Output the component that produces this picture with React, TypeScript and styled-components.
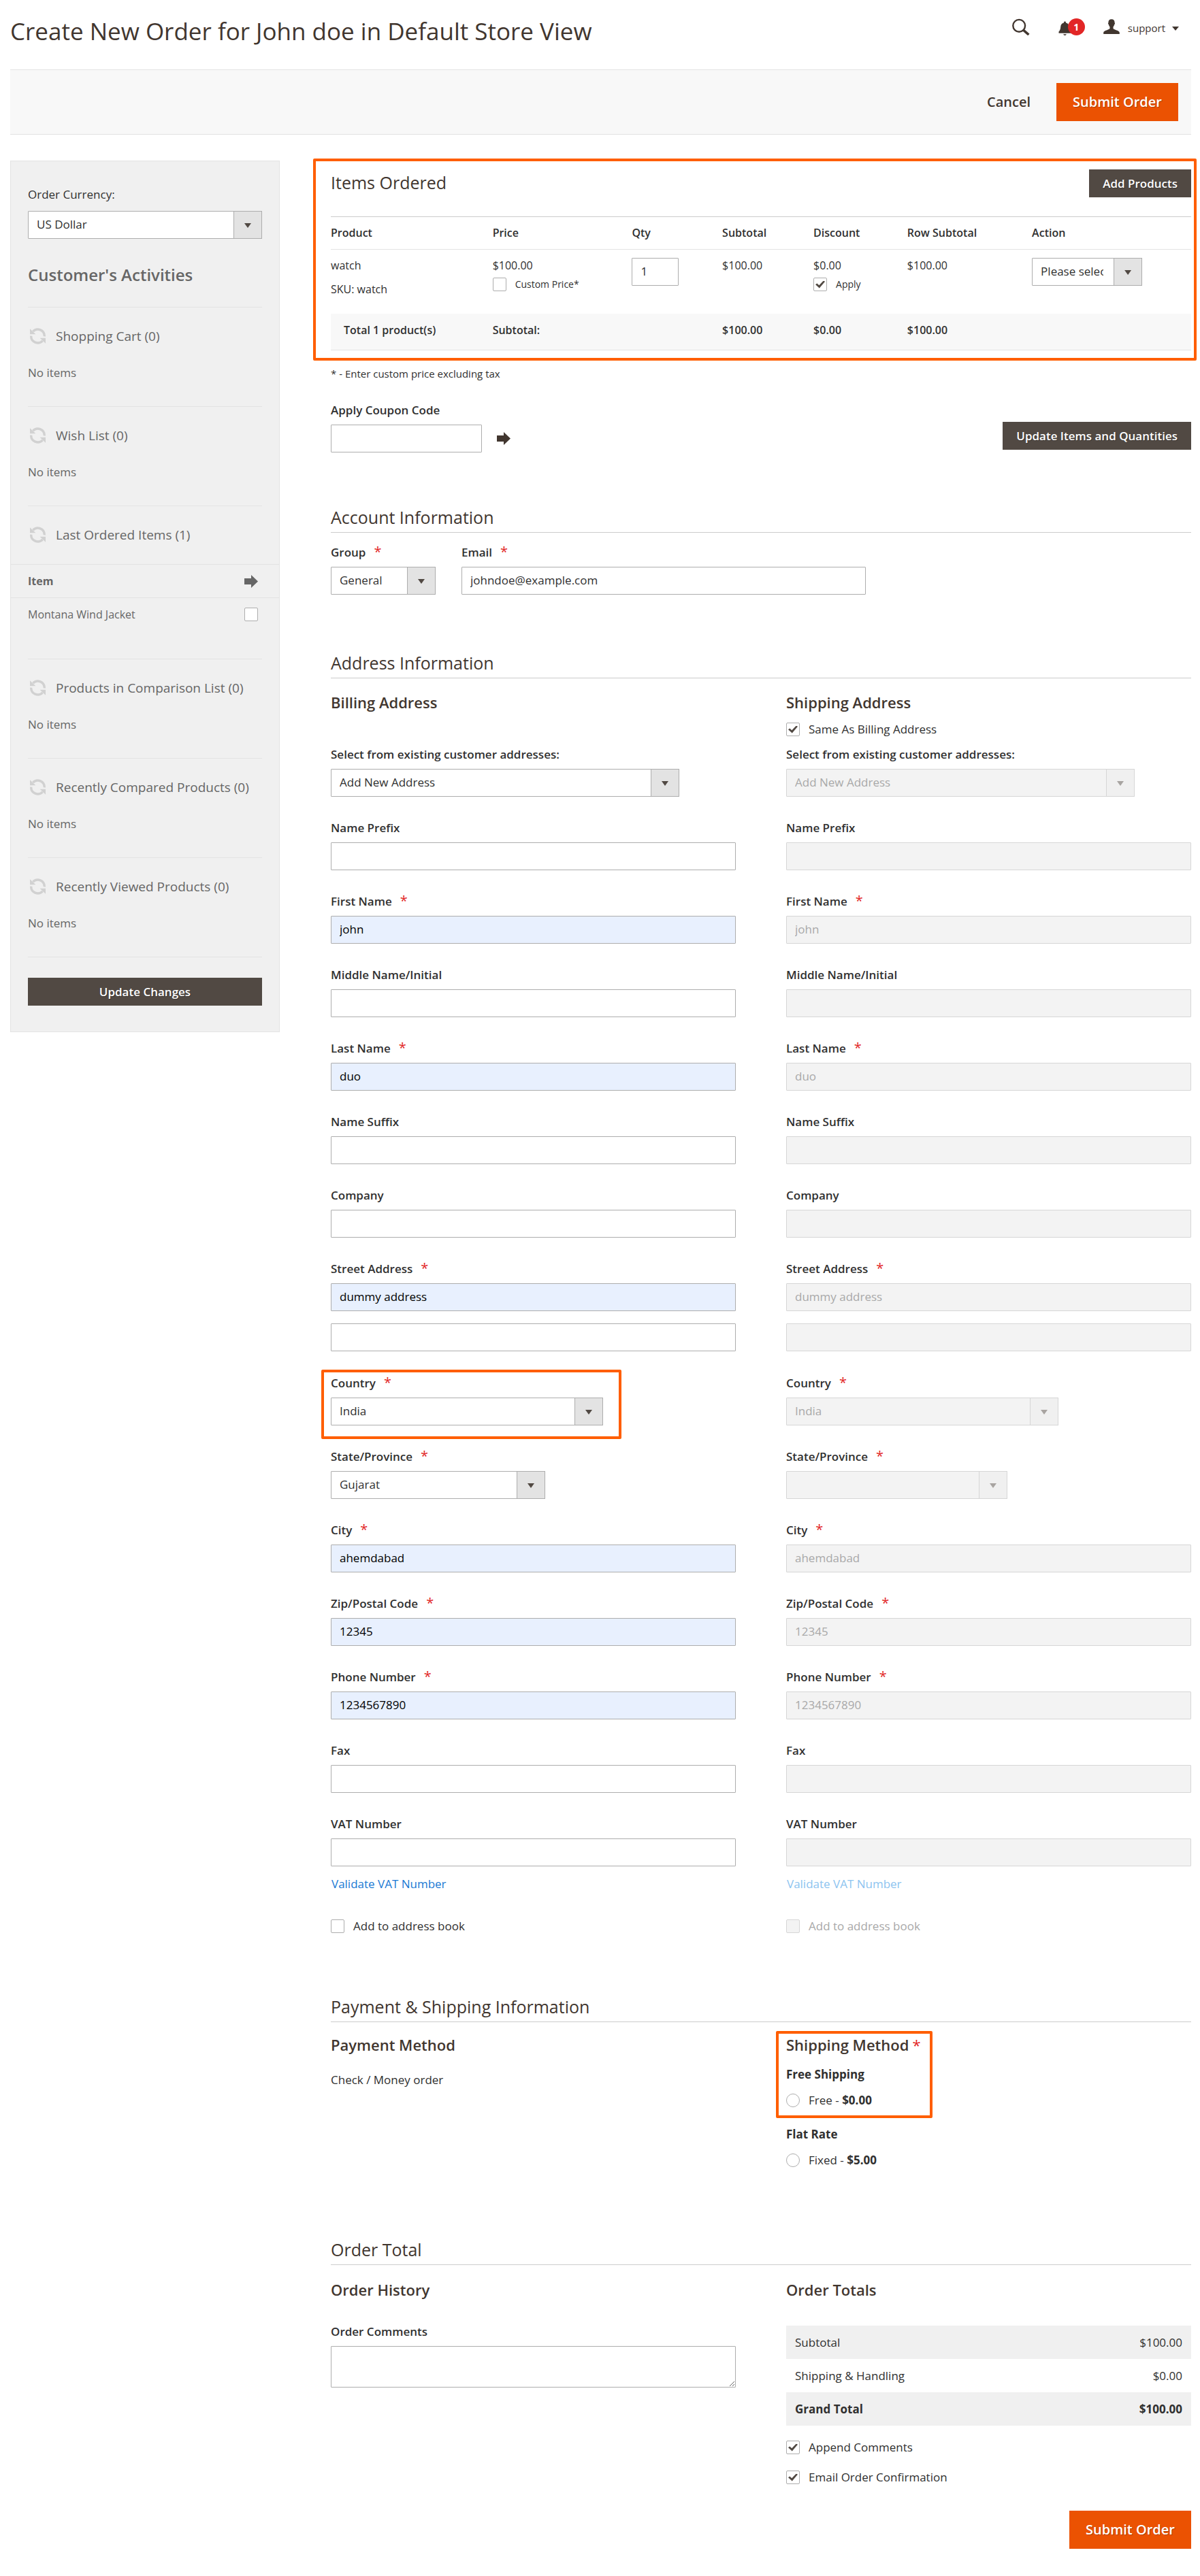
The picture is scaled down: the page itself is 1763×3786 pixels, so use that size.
import React, { useId } from "react";
import styled, { createGlobalStyle, css } from "styled-components";

const GlobalStyle = createGlobalStyle`
  *, *::before, *::after { box-sizing: border-box; }
  body {
    margin: 0;
    background: #fff;
    color: #303030;
    font-family: "Open Sans", "Noto Sans", sans-serif;
    font-size: 17px;
    line-height: 24px;
  }
  input, select, textarea, button {
    margin: 0;
    font: inherit;
    color: inherit;
  }
  h1, h2, h3, h4, p { margin: 0; }
`;

/* ---------- page frame ---------- */

const Page = styled.div`
  padding: 0 13px 39px 15px;
`;

const Header = styled.header`
  display: flex;
  justify-content: space-between;
  height: 102px;
`;

const PageTitle = styled.h1`
  margin-top: 22px;
  font-size: 35px;
  line-height: 48px;
  font-weight: 400;
  color: #41362f;
`;

const HeaderTools = styled.div`
  display: flex;
  align-items: center;
  height: 26px;
  margin-top: 26px;
  margin-right: 18px;
`;

const IconButton = styled.button`
  display: flex;
  align-items: center;
  padding: 0;
  border: 0;
  background: none;
  color: #41362f;
`;

const NotificationButton = styled(IconButton)`
  position: relative;
  width: 39px;
  margin-left: 42px;
`;

const NotificationBadge = styled.span`
  position: absolute;
  top: 0;
  right: 0;
  width: 25px;
  height: 25px;
  border-radius: 50%;
  background: #e22626;
  color: #fff;
  font-size: 14px;
  line-height: 25px;
  font-weight: 700;
  text-align: center;
`;

const AccountButton = styled(IconButton)`
  margin-left: 27px;
  font-size: 15px;
`;

const AccountName = styled.span`
  margin: 0 10px 0 12px;
  padding-top: 3px;
  line-height: 22px;
`;

const Caret = styled.span`
  width: 10px;
  height: 6px;
  margin-top: 6px;
  background: #41362f;
  clip-path: polygon(0 0, 100% 0, 50% 100%);
`;

const Toolbar = styled.div`
  display: flex;
  justify-content: flex-end;
  align-items: center;
  height: 96px;
  padding-right: 19px;
  border-top: 1px solid #e3e3e3;
  border-bottom: 1px solid #e3e3e3;
  background: #f8f8f8;
`;

const PrimaryButton = styled.button`
  min-width: 179px;
  height: 56px;
  padding: 0 19px;
  border: 0;
  background: #eb5202;
  color: #fff;
  font-size: 20px;
  font-weight: 600;
  text-shadow: 1px 1px 0 rgba(0, 0, 0, 0.25);
`;

const TextButton = styled.button`
  height: 56px;
  padding: 0 38px 0 20px;
  border: 0;
  background: none;
  color: #41362f;
  font-size: 20px;
  font-weight: 600;
`;

const DarkButton = styled.button`
  height: 41px;
  padding: 0 20px;
  border: 0;
  background: #514943;
  color: #fff;
  font-weight: 600;
  text-shadow: 1px 1px 0 rgba(0, 0, 0, 0.3);
`;

const Columns = styled.div`
  display: grid;
  grid-template-columns: 396px minmax(0, 1fr);
  column-gap: 75px;
  align-items: start;
  margin-top: 38px;
`;

/* ---------- form controls ---------- */

const controlBase = css`
  width: 100%;
  height: 41px;
  padding: 0 12px 2px;
  border: 1px solid #adadad;
  border-radius: 1px;
  background: #fff;
  color: #303030;
  opacity: 1;
  &:disabled {
    border-color: #d6d6d6;
    background: #f3f3f3;
    color: #a9a9a9;
  }
`;

const TextInput = styled.input<{ $filled?: boolean }>`
  ${controlBase}
  ${(p) => p.$filled && css`background: #e8f0fe; color: #000;`}
`;

const TextArea = styled.textarea`
  ${controlBase}
  display: block;
  height: 61px;
`;

const SelectBox = styled.span<{ $width: string }>`
  display: grid;
  width: ${(p) => p.$width};
  max-width: 100%;
`;

const NativeSelect = styled.select`
  ${controlBase}
  grid-area: 1 / 1;
  padding-right: 56px;
  appearance: none;
`;

const SelectArrow = styled.span<{ $disabled?: boolean }>`
  grid-area: 1 / 1;
  justify-self: end;
  display: flex;
  align-items: center;
  justify-content: center;
  width: 42px;
  height: 41px;
  border: 1px solid ${(p) => (p.$disabled ? "#d6d6d6" : "#adadad")};
  background: ${(p) => (p.$disabled ? "#f0f0f0" : "#e3e3e3")};
  pointer-events: none;
  &::before {
    content: "";
    width: 10px;
    height: 7px;
    margin-top: 2px;
    background: ${(p) => (p.$disabled ? "#a8a4a1" : "#514943")};
    clip-path: polygon(0 0, 100% 0, 50% 100%);
  }
`;

const tickBase = css`
  flex: none;
  display: grid;
  place-items: center;
  width: 20px;
  height: 20px;
  border: 1px solid #adadad;
  background: #fff;
  appearance: none;
  &:disabled {
    border-color: #d6d6d6;
    background: #f3f3f3;
  }
`;

const CheckInput = styled.input`
  ${tickBase}
  border-radius: 2px;
  &:checked::before {
    content: "";
    width: 14px;
    height: 11px;
    background: #514943;
    clip-path: polygon(0 52%, 16% 36%, 38% 62%, 84% 0, 100% 12%, 41% 100%);
  }
`;

const RadioInput = styled.input`
  ${tickBase}
  border-radius: 50%;
`;

const TickRow = styled.label<{ $muted?: boolean; $small?: boolean }>`
  display: flex;
  align-items: center;
  gap: 13px;
  min-height: ${(p) => (p.$small ? "20px" : "24px")};
  font-size: ${(p) => (p.$small ? "14px" : "17px")};
  line-height: ${(p) => (p.$small ? "18px" : "24px")};
  color: ${(p) => (p.$muted ? "#a9a9a9" : "inherit")};
`;

const FieldLabel = styled.label`
  display: block;
  margin-bottom: 10px;
  line-height: 23px;
  font-weight: 600;
`;

const Star = styled.span<{ $tight?: boolean }>`
  margin-left: ${(p) => (p.$tight ? "5px" : "12px")};
  color: #e22626;
  font-size: ${(p) => (p.$tight ? "22px" : "20px")};
  line-height: 20px;
  font-weight: 400;
`;

const Select = ({ id, value, width, disabled }: { id: string; value: string; width: string; disabled?: boolean }) => (
  <SelectBox $width={width}>
    <NativeSelect id={id} defaultValue={value} disabled={disabled}>
      <option value={value}>{value}</option>
    </NativeSelect>
    <SelectArrow $disabled={disabled} aria-hidden="true" />
  </SelectBox>
);

type FieldProps = {
  label: string;
  required?: boolean;
  value?: string;
  filled?: boolean;
  disabled?: boolean;
  selectWidth?: string;
};

const Field = ({ label, required, value = "", filled, disabled, selectWidth }: FieldProps) => {
  const id = useId();
  return (
    <FieldBox>
      <FieldLabel htmlFor={id}>
        {label}
        {required && <Star>*</Star>}
      </FieldLabel>
      {selectWidth ? (
        <Select id={id} value={value} width={selectWidth} disabled={disabled} />
      ) : (
        <TextInput id={id} defaultValue={value} $filled={filled && !disabled} disabled={disabled} />
      )}
    </FieldBox>
  );
};

const FieldBox = styled.div`
  display: grid;
  grid-template-rows: 33px 41px;
  ${FieldLabel} { margin-bottom: 0; }
`;

/* Orange callout frame drawn over the part it wraps. */
const Callout = styled.div<{ $inset: string; $fit?: boolean }>`
  position: relative;
  width: ${(p) => (p.$fit ? "fit-content" : "auto")};
  &::after {
    content: "";
    position: absolute;
    inset: ${(p) => p.$inset};
    border: 4px solid #ff5e00;
    border-radius: 2px;
    pointer-events: none;
  }
`;

/* ---------- sidebar ---------- */

const Sidebar = styled.aside`
  padding: 36px 0 38px;
  border: 1px solid #e3e3e3;
  background: #f0f0f0;
  color: #666;
`;

const SidebarInset = styled.div`
  padding: 0 25px;
`;

const CurrencyLabel = styled.label`
  display: block;
  margin-bottom: 12px;
  line-height: 25px;
  color: #303030;
`;

const SidebarTitle = styled.h2`
  margin: 36px 0 30px;
  font-size: 24px;
  line-height: 34px;
  font-weight: 600;
`;

const Activity = styled.section`
  height: 146px;
  margin: 0 25px;
  padding-top: 30px;
  border-top: 1px solid #e3e3e3;
`;

const ActivityWithItems = styled(Activity)`
  height: 225px;
`;

const ActivityHead = styled.h3`
  display: flex;
  align-items: center;
  gap: 14px;
  line-height: 24px;
  font-size: 19px;
  font-weight: 400;
`;

const RefreshButton = styled.button`
  display: flex;
  width: 27px;
  height: 24px;
  padding: 0 0 0 2px;
  border: 0;
  background: none;
  color: #d1d1d1;
`;

const Empty = styled.p`
  margin-top: 30px;
`;

const ItemTable = styled.table`
  width: calc(100% + 50px);
  margin: 31px -25px 0;
  border-collapse: collapse;
  font-size: 16px;
  th, td {
    height: 49px;
    padding: 0 25px;
    text-align: left;
  }
  th {
    border-top: 1px solid #e3e3e3;
    border-bottom: 1px solid #e3e3e3;
    font-weight: 700;
  }
  th:last-child, td:last-child {
    width: 82px;
    padding: 0 31px;
  }
  svg { display: block; }
`;

const SidebarFooter = styled.div`
  display: grid;
  margin: 0 25px;
  padding-top: 30px;
  border-top: 1px solid #e3e3e3;
`;

/* ---------- order form ---------- */

const ItemsHead = styled.div`
  display: flex;
  justify-content: space-between;
  align-items: center;
  padding-top: 13px;
  margin-bottom: 28px;
`;

const ItemsTitle = styled.h2`
  padding-bottom: 4px;
  font-size: 25px;
  line-height: 34px;
  font-weight: 400;
  color: #41362f;
`;

const ItemsTable = styled.table`
  width: 100%;
  table-layout: fixed;
  border-collapse: collapse;
  border-top: 1px solid #ccc;
  font-size: 16px;
  th, td {
    padding: 0;
    text-align: left;
    vertical-align: top;
  }
  thead th {
    height: 48px;
    padding-top: 11px;
    border-bottom: 1px solid #e3e3e3;
    font-weight: 600;
  }
  tbody td {
    height: 94px;
    padding-top: 11px;
  }
  tfoot td {
    height: 54px;
    padding-top: 12px;
    border-bottom: 1px solid #e3e3e3;
    background: #f8f8f8;
    font-weight: 600;
  }
  tfoot td:first-child { padding-left: 19px; }
  tbody td label { margin-top: 6px; }
`;

const Sku = styled.div`
  margin-top: 11px;
`;

const QtyInput = styled(TextInput)`
  width: 69px;
  margin-top: 1px;
  font-size: 17px;
`;

const ActionCell = styled.div`
  margin-top: 1px;
  font-size: 17px;
`;

const Footnote = styled.p`
  margin-top: 22px;
  font-size: 15px;
`;

const CouponRow = styled.div`
  display: flex;
  justify-content: space-between;
  align-items: flex-end;
  margin-top: 30px;
`;

const CouponControls = styled.div`
  display: flex;
  align-items: center;
  gap: 22px;
`;

const CouponInput = styled(TextInput)`
  width: 222px;
`;

const UpdateButton = styled(DarkButton)`
  margin-bottom: 4px;
`;

const SectionTitle = styled.h2<{ $before: number; $after: number }>`
  margin: ${(p) => p.$before}px 0 ${(p) => p.$after}px;
  padding-bottom: 5px;
  border-bottom: 1px solid #ccc;
  font-size: 25px;
  line-height: 34px;
  font-weight: 400;
  color: #41362f;
`;

const AccountFields = styled.div`
  display: grid;
  grid-template-columns: 154px minmax(0, 594px);
  column-gap: 38px;
`;

const TwoColumns = styled.div`
  display: grid;
  grid-template-columns: repeat(2, minmax(0, 1fr));
  column-gap: 74px;
`;

const SubTitle = styled.h3`
  font-size: 22px;
  line-height: 30px;
  font-weight: 600;
  color: #41362f;
`;

const SameAddress = styled.div`
  display: flex;
  align-items: center;
  height: 50px;
`;

const FieldStack = styled.div`
  display: grid;
  row-gap: 34px;
`;

const StreetLine = styled(TextInput)`
  display: block;
  margin-top: 18px;
`;

const StreetGroup = styled.div`
  padding-bottom: 1px;
`;

const VatLink = styled.a<{ $muted?: boolean }>`
  display: block;
  width: fit-content;
  margin: 14px 0 38px 1px;
  color: ${(p) => (p.$muted ? "#8dc4f0" : "#1979d4")};
  text-decoration: none;
`;

const PaymentName = styled.p`
  margin-top: 25px;
`;

const Carrier = styled.h4<{ $gap: number }>`
  margin: ${(p) => p.$gap}px 0 14px;
  font-size: 17px;
  font-weight: 700;
`;

const CommentsField = styled.div`
  margin-top: 35px;
`;

const TotalsTable = styled.table`
  width: 100%;
  margin: 38px 0 20px;
  border-collapse: collapse;
  th, td {
    height: 49px;
    padding: 0 13px;
    font-weight: 400;
    text-align: left;
  }
  td { text-align: right; }
  tr:nth-child(odd) { background: #f0f0f0; }
  tr:last-child th, tr:last-child td { font-weight: 700; }
`;

const TickStack = styled.div`
  display: grid;
  row-gap: 20px;
`;

const SubmitRow = styled.div`
  display: flex;
  justify-content: flex-end;
  margin-top: 37px;
`;

/* ---------- icons ---------- */

const SearchIcon = () => (
  <svg width="27" height="26" viewBox="0 0 27 26" fill="none" stroke="currentColor" aria-hidden="true">
    <circle cx="11.2" cy="11.8" r="8.9" strokeWidth="2.4" />
    <path d="M17.4 18.2 L25.4 25" strokeWidth="3.6" />
  </svg>
);

const BellIcon = () => (
  <svg width="20" height="25" viewBox="0 0 20 25" fill="currentColor" aria-hidden="true">
    <path d="M9.5 4.5c.9 0 1.5.6 1.5 1.5v.5c3 .7 4.600 2.900 4.800 6 .2 3.300.9 5.300 2.700 7v2.200H.5v-2.200c1.800-1.700 2.500-3.700 2.700-7 .2-3.100 1.800-5.300 4.800-6V6c0-.9.600-1.500 1.500-1.500z" />
    <path d="M7.200 23.200h4.600c-.3 1.100-1.200 1.800-2.300 1.800s-2-.7-2.300-1.800z" />
  </svg>
);

const UserIcon = () => (
  <svg width="24" height="24" viewBox="0 0 24 24" fill="currentColor" aria-hidden="true">
    <path d="M12 1.200c3 0 4.600 2 4.600 4.800 0 .7.500.9.400 1.700-.1.700-.5 1.100-.8 1.300-.3 1.500-.9 2.700-1.700 3.500v2.300c0 .9 1.300 1.300 3.600 2.100 3.200 1.100 5.700 1.900 5.700 4.200V23H.2v-1.900c0-2.300 2.500-3.100 5.700-4.200 2.300-.8 3.600-1.200 3.600-2.100v-2.300c-.8-.8-1.400-2-1.700-3.500-.3-.2-.7-.6-.8-1.300-.1-.8.400-1 .4-1.700 0-2.800 1.600-4.800 4.600-4.800z" />
  </svg>
);

const RefreshIcon = () => (
  <svg width="25" height="24" viewBox="0 0 25 24" aria-hidden="true">
    <g fill="none" stroke="currentColor" strokeWidth="3.400">
      <path d="M5.400 5.200 A9.800 9.800 0 0 1 22.300 12.400" />
      <path d="M19.600 18.800 A9.800 9.800 0 0 1 2.700 11.600" />
    </g>
    <path d="M1 1.200 V9.200 H9.400z M24 22.800 V14.800 H15.600z" fill="currentColor" />
  </svg>
);

const ArrowIcon = () => (
  <svg width="20" height="19" viewBox="0 0 20 19" fill="currentColor" aria-hidden="true">
    <path d="M0 5h10V0l10 9.500L10 19v-5H0z" />
  </svg>
);

/* ---------- parts ---------- */

const ActivityTitle = ({ text }: { text: string }) => (
  <ActivityHead>
    <RefreshButton aria-label={`Refresh ${text}`}>
      <RefreshIcon />
    </RefreshButton>
    {text}
  </ActivityHead>
);

const EmptyActivity = ({ title }: { title: string }) => (
  <Activity>
    <ActivityTitle text={title} />
    <Empty>No items</Empty>
  </Activity>
);

const AddressFields = ({ disabled, stateValue, stateWidth }: { disabled?: boolean; stateValue: string; stateWidth: string }) => {
  const country = <Field label="Country" required value="India" selectWidth="400px" disabled={disabled} />;
  return (
    <>
      <FieldStack>
        <Field label="Select from existing customer addresses:" value="Add New Address" selectWidth="512px" disabled={disabled} />
        <Field label="Name Prefix" disabled={disabled} />
        <Field label="First Name" required value="john" filled disabled={disabled} />
        <Field label="Middle Name/Initial" disabled={disabled} />
        <Field label="Last Name" required value="duo" filled disabled={disabled} />
        <Field label="Name Suffix" disabled={disabled} />
        <Field label="Company" disabled={disabled} />
        <StreetGroup>
          <Field label="Street Address" required value="dummy address" filled disabled={disabled} />
          <StreetLine aria-label="Street Address line 2" disabled={disabled} />
        </StreetGroup>
        {disabled ? country : <Callout $fit $inset="-8px -27px -20px -14px">{country}</Callout>}
        <Field label="State/Province" required value={stateValue} selectWidth={stateWidth} disabled={disabled} />
        <Field label="City" required value="ahemdabad" filled disabled={disabled} />
        <Field label="Zip/Postal Code" required value="12345" filled disabled={disabled} />
        <Field label="Phone Number" required value="1234567890" filled disabled={disabled} />
        <Field label="Fax" disabled={disabled} />
        <Field label="VAT Number" disabled={disabled} />
      </FieldStack>
      <VatLink href="#" $muted={disabled}>Validate VAT Number</VatLink>
      <TickRow $muted={disabled}>
        <CheckInput type="checkbox" disabled={disabled} />
        Add to address book
      </TickRow>
    </>
  );
};

const ItemsOrdered = () => (
  <Callout as="section" $inset="-3px -8px -15px -26px">
    <ItemsHead>
      <ItemsTitle>Items Ordered</ItemsTitle>
      <DarkButton>Add Products</DarkButton>
    </ItemsHead>
    <ItemsTable>
      <colgroup>
        {["18.8%", "16.2%", "10.5%", "10.6%", "10.9%", "14.5%", "18.5%"].map((width, i) => (
          <col key={i} width={width} />
        ))}
      </colgroup>
      <thead>
        <tr>
          {["Product", "Price", "Qty", "Subtotal", "Discount", "Row Subtotal", "Action"].map((name) => (
            <th key={name} scope="col">{name}</th>
          ))}
        </tr>
      </thead>
      <tbody>
        <tr>
          <td>
            watch
            <Sku>SKU: watch</Sku>
          </td>
          <td>
            $100.00
            <TickRow $small>
              <CheckInput type="checkbox" />
              Custom Price*
            </TickRow>
          </td>
          <td><QtyInput aria-label="Qty" defaultValue="1" /></td>
          <td>$100.00</td>
          <td>
            $0.00
            <TickRow $small>
              <CheckInput type="checkbox" defaultChecked />
              Apply
            </TickRow>
          </td>
          <td>$100.00</td>
          <td>
            <ActionCell>
              <SelectBox $width="162px">
                <NativeSelect aria-label="Action" defaultValue="">
                  <option value="">Please select</option>
                </NativeSelect>
                <SelectArrow aria-hidden="true" />
              </SelectBox>
            </ActionCell>
          </td>
        </tr>
      </tbody>
      <tfoot>
        <tr>
          <td>Total 1 product(s)</td>
          <td colSpan={2}>Subtotal:</td>
          <td>$100.00</td>
          <td>$0.00</td>
          <td colSpan={2}>$100.00</td>
        </tr>
      </tfoot>
    </ItemsTable>
  </Callout>
);

export default function App() {
  return (
    <>
      <GlobalStyle />
      <Page>
        <Header>
          <PageTitle>Create New Order for John doe in Default Store View</PageTitle>
          <HeaderTools>
            <IconButton aria-label="Search"><SearchIcon /></IconButton>
            <NotificationButton aria-label="Notifications">
              <BellIcon />
              <NotificationBadge>1</NotificationBadge>
            </NotificationButton>
            <AccountButton>
              <UserIcon />
              <AccountName>support</AccountName>
              <Caret />
            </AccountButton>
          </HeaderTools>
        </Header>

        <Toolbar>
          <TextButton>Cancel</TextButton>
          <PrimaryButton>Submit Order</PrimaryButton>
        </Toolbar>

        <Columns>
          <Sidebar>
            <SidebarInset>
              <CurrencyLabel htmlFor="currency">Order Currency:</CurrencyLabel>
              <Select id="currency" value="US Dollar" width="100%" />
              <SidebarTitle>Customer's Activities</SidebarTitle>
            </SidebarInset>
            <EmptyActivity title="Shopping Cart (0)" />
            <EmptyActivity title="Wish List (0)" />
            <ActivityWithItems>
              <ActivityTitle text="Last Ordered Items (1)" />
              <ItemTable>
                <thead>
                  <tr>
                    <th scope="col">Item</th>
                    <th scope="col"><ArrowIcon /></th>
                  </tr>
                </thead>
                <tbody>
                  <tr>
                    <td>Montana Wind Jacket</td>
                    <td><CheckInput type="checkbox" aria-label="Montana Wind Jacket" /></td>
                  </tr>
                </tbody>
              </ItemTable>
            </ActivityWithItems>
            <EmptyActivity title="Products in Comparison List (0)" />
            <EmptyActivity title="Recently Compared Products (0)" />
            <EmptyActivity title="Recently Viewed Products (0)" />
            <SidebarFooter>
              <DarkButton>Update Changes</DarkButton>
            </SidebarFooter>
          </Sidebar>

          <main>
            <ItemsOrdered />
            <Footnote>* - Enter custom price excluding tax</Footnote>
            <CouponRow>
              <div>
                <FieldLabel htmlFor="coupon">Apply Coupon Code</FieldLabel>
                <CouponControls>
                  <CouponInput id="coupon" />
                  <IconButton aria-label="Apply"><ArrowIcon /></IconButton>
                </CouponControls>
              </div>
              <UpdateButton>Update Items and Quantities</UpdateButton>
            </CouponRow>

            <SectionTitle $before={78} $after={17}>Account Information</SectionTitle>
            <AccountFields>
              <Field label="Group" required value="General" selectWidth="100%" />
              <Field label="Email" required value="johndoe@example.com" />
            </AccountFields>

            <SectionTitle $before={83} $after={20}>Address Information</SectionTitle>
            <TwoColumns>
              <section>
                <SubTitle>Billing Address</SubTitle>
                <SameAddress />
                <AddressFields stateValue="Gujarat" stateWidth="315px" />
              </section>
              <section>
                <SubTitle>Shipping Address</SubTitle>
                <SameAddress>
                  <TickRow>
                    <CheckInput type="checkbox" defaultChecked />
                    Same As Billing Address
                  </TickRow>
                </SameAddress>
                <AddressFields disabled stateValue="" stateWidth="325px" />
              </section>
            </TwoColumns>

            <SectionTitle $before={89} $after={18}>Payment &amp; Shipping Information</SectionTitle>
            <TwoColumns>
              <section>
                <SubTitle>Payment Method</SubTitle>
                <PaymentName>Check / Money order</PaymentName>
              </section>
              <section>
                <Callout $fit $inset="-5px -17px -14px -15px">
                  <SubTitle>Shipping Method<Star $tight>*</Star></SubTitle>
                  <Carrier $gap={17}>Free Shipping</Carrier>
                  <TickRow>
                    <RadioInput type="radio" name="shipping" />
                    <span>Free - <strong>$0.00</strong></span>
                  </TickRow>
                </Callout>
                <Carrier $gap={26}>Flat Rate</Carrier>
                <TickRow>
                  <RadioInput type="radio" name="shipping" />
                  <span>Fixed - <strong>$5.00</strong></span>
                </TickRow>
              </section>
            </TwoColumns>

            <SectionTitle $before={102} $after={21}>Order Total</SectionTitle>
            <TwoColumns>
              <section>
                <SubTitle>Order History</SubTitle>
                <CommentsField>
                  <FieldLabel htmlFor="comments">Order Comments</FieldLabel>
                  <TextArea id="comments" />
                </CommentsField>
              </section>
              <section>
                <SubTitle>Order Totals</SubTitle>
                <TotalsTable>
                  <tbody>
                    <tr><th scope="row">Subtotal</th><td>$100.00</td></tr>
                    <tr><th scope="row">Shipping &amp; Handling</th><td>$0.00</td></tr>
                    <tr><th scope="row">Grand Total</th><td>$100.00</td></tr>
                  </tbody>
                </TotalsTable>
                <TickStack>
                  <TickRow><CheckInput type="checkbox" defaultChecked />Append Comments</TickRow>
                  <TickRow><CheckInput type="checkbox" defaultChecked />Email Order Confirmation</TickRow>
                </TickStack>
                <SubmitRow>
                  <PrimaryButton>Submit Order</PrimaryButton>
                </SubmitRow>
              </section>
            </TwoColumns>
          </main>
        </Columns>
      </Page>
    </>
  );
}
